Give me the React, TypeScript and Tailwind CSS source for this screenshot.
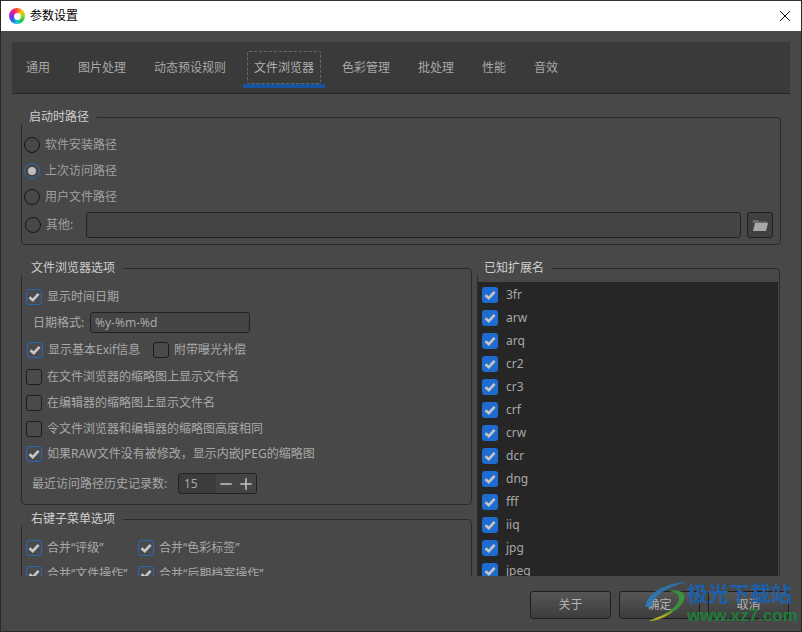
import React from "react";
import { Minus, Plus } from "lucide-react";

const FONT = "font-['Noto_Sans','Noto_Sans_CJK_SC',sans-serif]";

function Check({ className }: { className: string }) {
  return (
    <svg viewBox="0 0 14 14" className={className} fill="none" stroke="currentColor" strokeWidth="2.6">
      <path d="M2.5 7.2 L5.8 10.2 L11.6 3.8" />
    </svg>
  );
}

function Box({ on = false, className = "" }: { on?: boolean; className?: string }) {
  return (
    <span
      className={`flex h-4 w-4 shrink-0 items-center justify-center rounded-[3px] border ${
        on ? "border-[#2667b8] bg-[#4a4a4a] text-[#c8c8c8]" : "border-[#1c1c1c] bg-[#4a4a4a]"
      } ${className}`}
    >
      {on && <Check className="h-[14px] w-[14px]" />}
    </span>
  );
}

function Opt({ label, on = false, className = "" }: { label: string; on?: boolean; className?: string }) {
  return (
    <div className={`flex h-4 items-center gap-[5px] whitespace-nowrap text-[#a8a8a8] ${className}`}>
      <Box on={on} />
      <span>{label}</span>
    </div>
  );
}

function Radio({ label, on = false }: { label?: string; on?: boolean }) {
  return (
    <div className="flex h-4 items-center gap-[5px] text-[#a0a0a0]">
      <span
        className={`flex h-4 w-4 shrink-0 items-center justify-center rounded-full border ${
          on ? "border-[#2667b8]" : "border-[#141414]"
        }`}
      >
        {on && <span className="h-2 w-2 rounded-full bg-[#bdbdbd]" />}
      </span>
      {label && <span>{label}</span>}
    </div>
  );
}

function Group({ title, className = "", legendClass = "px-2", children }: { title: string; className?: string; legendClass?: string; children: React.ReactNode }) {
  return (
    <fieldset className={`rounded-[4px] border border-[#2b2b2b] ${className}`}>
      <legend className={`ml-[-1px] bg-[#484848] text-[12px] leading-[14px] text-[#cfcfcf] ${legendClass}`}>{title}</legend>
      {children}
    </fieldset>
  );
}

const TABS = ["通用", "图片处理", "动态预设规则", "文件浏览器", "色彩管理", "批处理", "性能", "音效"];
const EXTS = ["3fr", "arw", "arq", "cr2", "cr3", "crf", "crw", "dcr", "dng", "fff", "iiq", "jpg", "jpeg"];

function FooterButton({ label }: { label: string }) {
  return (
    <button className="h-7 w-[81px] rounded-[3px] border border-[#1f1f1f] bg-gradient-to-b from-[#555555] to-[#3d3d3d] text-[12px] text-[#b4b4b4]">
      {label}
    </button>
  );
}

export default function App() {
  return (
    <div className={`relative flex h-[632px] w-[802px] flex-col overflow-hidden border-x border-b border-[#2a2a2a] bg-[#484848] text-[12px] ${FONT}`}>
      <div className="h-px shrink-0 bg-[#333333]" />
      <div className="flex h-[30px] shrink-0 items-center bg-white pl-2 text-black">
        <span className="flex h-4 w-4 items-center justify-center rounded-full bg-[conic-gradient(#ff4d2e,#ffc21a,#8fdc1e,#18c24a,#18c8d8,#1f6be0,#8a2be2,#e81e8c,#ff4d2e)]">
          <span className="h-[7px] w-[7px] rounded-full bg-white" />
        </span>
        <span className="ml-[5px]">参数设置</span>
        <svg viewBox="0 0 12 12" className="ml-auto mr-[10px] h-3 w-3" stroke="#111" strokeWidth="1">
          <path d="M1 1 L11 11 M11 1 L1 11" />
        </svg>
      </div>

      <div className="mx-[11px] mt-[11px] flex h-[52px] shrink-0 items-center border-b border-[#262626] bg-[#3a3a3a]">
        {TABS.map((t, i) =>
          i === 3 ? (
            <div key={t} className="relative flex h-[33px] items-center px-[14px] text-[#b0b0b0]">
              <span className="absolute inset-x-[7px] top-0 h-[33px] rounded-[2px] border border-dashed border-[#6a6a6a]" />
              <span className="absolute inset-x-[3px] top-[33px] h-1 bg-[#17549f]" />
              {t}
            </div>
          ) : (
            <div key={t} className="flex h-[33px] items-center px-[14px] text-[#a8a8a8]">
              {t}
            </div>
          )
        )}
      </div>

      <div className="ml-5 mr-[20px] h-[482px] shrink-0 overflow-hidden pt-4">
        <Group title="启动时路径" className="pb-[6px]">
          <div className="flex flex-col gap-[10px] pl-[2px] pt-[13px]">
            <Radio label="软件安装路径" />
            <Radio label="上次访问路径" on />
            <Radio label="用户文件路径" />
          </div>
          <div className="mt-[7px] flex items-center pl-[3px] pr-[6px]">
            <Radio label="其他:" />
            <div className="ml-[13px] h-[26px] flex-1 rounded-[3px] border border-[#222222] bg-[#444444]" />
            <div className="ml-[6px] mr-px flex h-[26px] w-[26px] items-center justify-center rounded-[3px] border border-[#1f1f1f] bg-[#404040]">
              <svg viewBox="0 0 16 14" className="h-[14px] w-4">
                <path d="M1 2 L6 2 L7 3.5 L15 3.5 L15 5 L1 5 Z" fill="#6e6e6e" />
                <path d="M3 5 L16 5 L14 13 L1 13 Z" fill="#a8a8a8" />
              </svg>
            </div>
          </div>
        </Group>

        <div className="mt-[16px] flex gap-[5px]">
          <div className="flex w-[451px] shrink-0 flex-col gap-[7px]">
            <Group title="文件浏览器选项" legendClass="pl-[10px] pr-2" className="pb-[10px]">
              <div className="pl-1">
                <Opt label="显示时间日期" on className="mt-[14px]" />
                <div className="mt-[7px] flex h-[21px] items-center pl-[7px] text-[#a8a8a8]">
                  <span className="w-[57px] shrink-0">日期格式:</span>
                  <div className="flex h-[21px] w-[160px] items-center rounded-[3px] border border-[#222222] bg-[#444444] px-[4px] text-[#a8a8a8]">
                    %y-%m-%d
                  </div>
                </div>
                <div className="mt-[9px] flex h-4 pl-px">
                  <Opt label="显示基本Exif信息" on className="w-[126px]" />
                  <Opt label="附带曝光补偿" />
                </div>
                <Opt label="在文件浏览器的缩略图上显示文件名" className="mt-[11px]" />
                <Opt label="在编辑器的缩略图上显示文件名" className="mt-[10px]" />
                <Opt label="令文件浏览器和编辑器的缩略图高度相同" className="mt-[10px]" />
                <Opt label={"如果RAW文件没有被修改\uFF0C显示内嵌JPEG的缩略图"} on className="mt-[9px]" />
                <div className="mt-[11px] flex h-[21px] items-center pl-[6px] text-[#a8a8a8]">
                  <span className="w-[146px] shrink-0 whitespace-nowrap">最近访问路径历史记录数:</span>
                  <div className="flex h-[21px] w-[79px] items-center overflow-hidden rounded-[3px] border border-[#222222] bg-[#3c3c3c]">
                    <span className="w-[37px] pl-[5px]">15</span>
                    <div className="flex h-full flex-1 items-center bg-[#444444] pl-px text-[#c4c4c4]">
                      <Minus size={18} strokeWidth={2} />
                      <Plus size={18} strokeWidth={2} className="ml-[2px]" />
                    </div>
                  </div>
                </div>
              </div>
            </Group>
            <Group title="右键子菜单选项" legendClass="pl-[10px] pr-2" className="pb-3">
              <div className="pl-1">
                <div className="mt-[14px] flex h-4">
                  <Opt label="合并“评级”" on className="w-[112px]" />
                  <Opt label="合并“色彩标签”" on />
                </div>
                <div className="mt-[10px] flex h-4">
                  <Opt label="合并“文件操作”" on className="w-[112px]" />
                  <Opt label="合并“后期档案操作”" on />
                </div>
              </div>
            </Group>
          </div>

          <Group title="已知扩展名" legendClass="pl-[7px] pr-2" className="h-[400px] w-[303px] shrink-0">
            <div className="mr-px mt-[7px] h-[400px] bg-[#262626] pl-1 pt-[1px]">
              {EXTS.map((e) => (
                <div key={e} className="flex h-[23px] items-center gap-2 text-[#a8a8a8]">
                  <span className="flex h-4 w-4 items-center justify-center rounded-[3px] bg-[#1f6cd0] text-[#c4c4c4]">
                    <Check className="h-[14px] w-[14px]" />
                  </span>
                  {e}
                </div>
              ))}
            </div>
          </Group>
        </div>
      </div>

      <div className="mr-3 mt-[15px] flex justify-end gap-2">
        <FooterButton label="关于" />
        <FooterButton label="确定" />
        <FooterButton label="取消" />
      </div>

      <div className="pointer-events-none absolute left-[642px] top-[581px] h-[42px] w-[156px]">
        <svg viewBox="0 0 50 42" className="absolute left-0 top-0 h-[42px] w-[50px]" fill="none">
          <path d="M2 26 C4 12 22 2 44 1 C28 5 12 12 8 26 Z" fill="#2b78b8" opacity="0.9" />
          <path d="M26 10 C40 8 46 14 38 24 C32 32 20 36 6 40 C20 34 34 28 36 18 C37 13 32 11 26 10 Z" fill="#3a9a3c" opacity="0.9" />
          <path d="M6 40 C14 36 22 34 30 30 C24 36 14 40 6 40 Z" fill="#b5a81e" />
        </svg>
        <span className="absolute left-[44px] top-0 whitespace-nowrap font-['Liberation_Sans','Noto_Sans_CJK_SC',sans-serif] text-[21px] font-bold leading-[26px] text-[#1d5fa8]">极光下载站</span>
        <span className="absolute left-[44px] top-[26px] whitespace-nowrap font-['Liberation_Sans',sans-serif] text-[17px] font-bold leading-[18px] text-[#1f7d3a]">www.xz7.com</span>
      </div>
    </div>
  );
}
